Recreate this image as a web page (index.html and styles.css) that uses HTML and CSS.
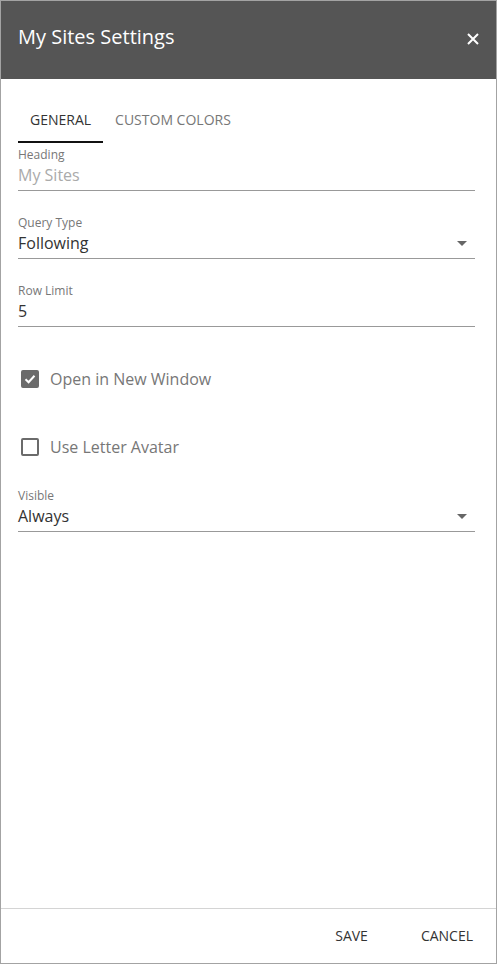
FILE: index.html
```html
<!DOCTYPE html>
<html lang="en">
<head>
<meta charset="utf-8">
<title>My Sites Settings</title>
<link rel="stylesheet" href="styles.css">
</head>
<body>
<div class="panel">
  <header class="panel-header">
    <h1 class="panel-title">My Sites Settings</h1>
    <button class="close-btn" aria-label="Close">
      <svg width="12" height="12" viewBox="0 0 12 12"><path d="M1 1 L11 11 M11 1 L1 11" stroke="#fff" stroke-width="2" fill="none"/></svg>
    </button>
  </header>

  <main class="panel-body">
    <nav class="tabs">
      <div class="tab tab-active">GENERAL</div>
      <div class="tab">CUSTOM COLORS</div>
    </nav>

    <div class="field field-first">
      <div class="field-label">Heading</div>
      <div class="field-value value-disabled">My Sites</div>
    </div>

    <div class="field">
      <div class="field-label">Query Type</div>
      <div class="field-value select-value">
        <span>Following</span>
        <svg class="caret" width="10" height="5" viewBox="0 0 10 5"><path d="M0 0 L10 0 L5 5 Z" fill="#666"/></svg>
      </div>
    </div>

    <div class="field">
      <div class="field-label">Row Limit</div>
      <div class="field-value">5</div>
    </div>

    <div class="check-row check-first">
      <span class="checkbox checked">
        <svg width="14" height="14" viewBox="0 0 14 14"><path d="M2.5 7.2 L5.6 10.2 L11.5 3.8" stroke="#fff" stroke-width="2" fill="none"/></svg>
      </span>
      <span class="check-label">Open in New Window</span>
    </div>

    <div class="check-row check-second">
      <span class="checkbox"></span>
      <span class="check-label">Use Letter Avatar</span>
    </div>

    <div class="field field-visible">
      <div class="field-label">Visible</div>
      <div class="field-value select-value">
        <span>Always</span>
        <svg class="caret" width="10" height="5" viewBox="0 0 10 5"><path d="M0 0 L10 0 L5 5 Z" fill="#666"/></svg>
      </div>
    </div>
  </main>

  <footer class="panel-footer">
    <button class="footer-btn">SAVE</button>
    <button class="footer-btn">CANCEL</button>
  </footer>
</div>
</body>
</html>
```

FILE: styles.css
```css
* {
  box-sizing: border-box;
}

html, body {
  margin: 0;
  padding: 0;
  background: #fff;
}

body {
  font-family: "Open Sans", "Liberation Sans", sans-serif;
  color: #333;
}

.panel {
  width: 497px;
  height: 964px;
  border: 1px solid #a3a3a3;
  display: flex;
  flex-direction: column;
  background: #fff;
}

.panel-header {
  height: 78px;
  background: #555555;
  display: flex;
  align-items: center;
  justify-content: space-between;
  padding: 0 17px 6px 17px;
  flex-shrink: 0;
}

.panel-title {
  margin: 0;
  font-size: 20px;
  font-weight: 400;
  line-height: 28px;
  color: #fff;
}

.close-btn {
  background: none;
  border: 0;
  padding: 0;
  width: 12px;
  height: 12px;
  display: flex;
  margin-top: 3px;
}

.panel-body {
  flex: 1;
  padding: 0 21px 0 17px;
  display: flex;
  flex-direction: column;
}

.tabs {
  display: flex;
}

.tab {
  font-size: 14px;
  line-height: 20px;
  padding: 31px 12px 11px 12px;
  border-bottom: 2px solid transparent;
  color: #777;
}

.tab-active {
  color: #333;
  border-bottom-color: #111;
}

.field {
  margin-top: 22px;
  border-bottom: 1px solid #999;
  padding-bottom: 3px;
}

.field-first {
  margin-top: 2px;
}

.field-label {
  font-size: 12px;
  line-height: 16px;
  padding-top: 2px;
  color: #777;
}

.field-value {
  font-size: 16px;
  line-height: 24px;
  color: #333;
}

.value-disabled {
  color: #aaa;
}

.select-value {
  display: flex;
  align-items: center;
  justify-content: space-between;
}

.caret {
  margin-right: 8px;
  margin-top: 1px;
}

.check-row {
  height: 48px;
  display: flex;
  align-items: center;
  padding-left: 3px;
}

.check-first {
  margin-top: 28px;
}

.check-second {
  margin-top: 20px;
}

.checkbox {
  width: 18px;
  height: 18px;
  border: 2px solid #6b6b6b;
  border-radius: 2px;
  display: flex;
  align-items: center;
  justify-content: center;
  flex-shrink: 0;
}

.checkbox.checked {
  background: #6b6b6b;
}

.check-label {
  margin-left: 11px;
  font-size: 16px;
  line-height: 24px;
  color: #777;
}

.field-visible {
  margin-top: 15px;
}

.panel-footer {
  height: 55px;
  border-top: 1px solid #d4d4d4;
  display: flex;
  align-items: center;
  justify-content: flex-end;
  gap: 21px;
  padding: 0 7px 0 0;
  flex-shrink: 0;
}

.footer-btn {
  background: none;
  border: 0;
  font-family: "Open Sans", "Liberation Sans", sans-serif;
  font-size: 14px;
  line-height: 20px;
  color: #333;
  padding: 0 16px;
}
```
